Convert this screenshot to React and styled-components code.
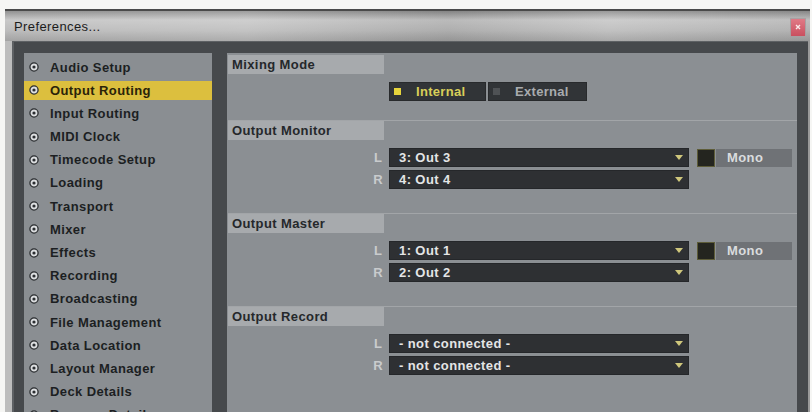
import React from 'react'
import styled, { createGlobalStyle } from 'styled-components'

const GlobalStyle = createGlobalStyle`
  html, body {
    margin: 0;
    padding: 0;
    background: #f6f6f4;
    overflow: hidden;
  }
  body {
    font-family: "Liberation Sans", Arial, sans-serif;
  }
`

const Window = styled.div`
  margin: 9px 0 0 5px;
  width: 805px;
  height: 403px;
  display: flex;
  flex-direction: column;
  overflow: hidden;
`

const TitleBar = styled.div`
  height: 30px;
  border-top: 2px solid #4a4a4a;
  display: flex;
  align-items: center;
  justify-content: space-between;
  padding: 0 4px 0 9px;
  background:
    linear-gradient(90deg, rgba(255,255,255,0.05) 0%, rgba(255,255,255,0.15) 30%, rgba(0,0,0,0.06) 55%, rgba(255,255,255,0.12) 75%, rgba(0,0,0,0.04) 100%),
    linear-gradient(180deg, #8c8c8c 0%, #c6c6c6 30%, #b9b9b9 65%, #9e9e9e 100%);
`

const Title = styled.span`
  font-size: 13px;
  letter-spacing: 0.4px;
  color: #1c1c1c;
`

const CloseButton = styled.div`
  width: 14px;
  height: 17px;
  margin-top: 2px;
  background: linear-gradient(180deg, #e07a86 0%, #c9505f 100%);
  border: 1px solid #a8a0a2;
  display: flex;
  align-items: center;
  justify-content: center;
`

const Body = styled.div`
  flex: 1;
  display: flex;
  gap: 15px;
  padding: 12px 11px 0 12px;
  background: #46494c;
  border-left: 7px solid #bdbdbd;
  border-right: 2px solid #9a9a9a;
  box-shadow: inset 2px 1px 0 #5e6164;
  min-height: 0;
`

const Sidebar = styled.div`
  width: 188px;
  background: #8a8e92;
  padding-top: 4.5px;
  display: flex;
  flex-direction: column;
`

const NavItem = styled.div`
  height: 19px;
  flex: none;
  margin-bottom: 4.2px;
  display: flex;
  align-items: center;
  gap: 11px;
  padding-left: 5px;
  background: ${({ $active }) => ($active ? '#dcbf3e' : 'transparent')};
  color: ${({ $active }) => ($active ? '#2a2309' : '#1c1f22')};
  font-size: 13px;
  font-weight: bold;
  letter-spacing: 0.4px;
  white-space: nowrap;
`

const Content = styled.div`
  flex: 1;
  background: #8b8f93;
  padding-left: 1px;
  display: flex;
  flex-direction: column;
`

const Section = styled.div`
  border-top: ${({ $first }) => ($first ? 'none' : '1px solid #a2a5a8')};
  padding-top: ${({ $first }) => ($first ? '2px' : '0')};
  padding-bottom: ${({ $first }) => ($first ? '19px' : '24px')};
  display: flex;
  flex-direction: column;
  gap: 8px;
`

const SectionHeader = styled.div`
  width: 152px;
  height: 19px;
  padding-left: 4px;
  background: #a7aaad;
  color: #25282b;
  font-size: 13px;
  font-weight: bold;
  letter-spacing: 0.4px;
  display: flex;
  align-items: center;
`

const ModeRow = styled.div`
  margin-left: 161px;
  display: flex;
  gap: 2px;
`

const ModeButton = styled.div`
  width: ${({ $w }) => $w}px;
  height: 19px;
  box-sizing: border-box;
  background: #313437;
  border: 1px solid #282a2c;
  display: flex;
  align-items: center;
  padding-left: 4px;
  gap: 15px;
  color: ${({ $on }) => ($on ? '#d8cf5a' : '#a8abae')};
  font-size: 13px;
  font-weight: bold;
  letter-spacing: 0.3px;
`

const Led = styled.span`
  width: 7px;
  height: 7px;
  background: ${({ $on }) => ($on ? '#e6d43c' : '#4f5255')};
  flex: none;
`

const Channels = styled.div`
  display: flex;
  flex-direction: column;
  gap: 3px;
  margin-left: 139px;
`

const ChannelRow = styled.div`
  display: flex;
  align-items: center;
  height: 19px;
`

const ChannelLabel = styled.span`
  width: 22px;
  text-align: center;
  color: #c9cbcd;
  font-size: 13px;
  font-weight: bold;
`

const Select = styled.div`
  width: 300px;
  height: 19px;
  box-sizing: border-box;
  background: #2e3033;
  border: 1px solid #25272a;
  display: flex;
  align-items: center;
  justify-content: space-between;
  padding: 0 5px 0 9px;
  color: #e4e5e6;
  font-size: 13px;
  font-weight: bold;
  letter-spacing: 0.4px;
`

const MonoBox = styled.span`
  width: 18px;
  height: 18px;
  box-sizing: border-box;
  margin-left: 8px;
  background: #24251f;
  border: 1px solid #5d5c38;
`

const MonoButton = styled.span`
  width: 76px;
  height: 18px;
  margin-left: 1px;
  background: #6f7276;
  color: #dadcde;
  font-size: 13px;
  font-weight: bold;
  letter-spacing: 0.4px;
  display: flex;
  align-items: center;
  padding-left: 11px;
  box-sizing: border-box;
`

const RadioIcon = () => (
  <svg width="10" height="10" viewBox="0 0 10 10">
    <circle cx="5" cy="5" r="4.1" fill="#dcdee0" stroke="#2b2e31" strokeWidth="1.3" />
    <circle cx="5" cy="5" r="1.6" fill="#2b2e31" />
  </svg>
)

const Arrow = () => (
  <svg width="8" height="5" viewBox="0 0 8 5">
    <path d="M0 0 L8 0 L4 5 Z" fill="#cfc77c" />
  </svg>
)

const navItems = [
  'Audio Setup',
  'Output Routing',
  'Input Routing',
  'MIDI Clock',
  'Timecode Setup',
  'Loading',
  'Transport',
  'Mixer',
  'Effects',
  'Recording',
  'Broadcasting',
  'File Management',
  'Data Location',
  'Layout Manager',
  'Deck Details',
  'Browser Details',
]

const outputs = [
  { title: 'Output Monitor', l: '3: Out 3', r: '4: Out 4', mono: true },
  { title: 'Output Master', l: '1: Out 1', r: '2: Out 2', mono: true },
  { title: 'Output Record', l: '- not connected -', r: '- not connected -', mono: false },
]

const App = () => {
  return (
    <>
      <GlobalStyle />
      <Window>
        <TitleBar>
          <Title>Preferences...</Title>
          <CloseButton>
            <svg width="6" height="6" viewBox="0 0 6 6">
              <path d="M1 1 L5 5 M5 1 L1 5" stroke="#fbeaea" strokeWidth="1.4" />
            </svg>
          </CloseButton>
        </TitleBar>
        <Body>
          <Sidebar>
            {navItems.map((item) => (
              <NavItem key={item} $active={item === 'Output Routing'}>
                <RadioIcon />
                {item}
              </NavItem>
            ))}
          </Sidebar>
          <Content>
            <Section $first>
              <SectionHeader>Mixing Mode</SectionHeader>
              <ModeRow>
                <ModeButton $w={97} $on>
                  <Led $on />
                  Internal
                </ModeButton>
                <ModeButton $w={99}>
                  <Led />
                  External
                </ModeButton>
              </ModeRow>
            </Section>
            {outputs.map((out) => (
              <Section key={out.title}>
                <SectionHeader>{out.title}</SectionHeader>
                <Channels>
                  <ChannelRow>
                    <ChannelLabel>L</ChannelLabel>
                    <Select>
                      {out.l}
                      <Arrow />
                    </Select>
                    {out.mono && (
                      <>
                        <MonoBox />
                        <MonoButton>Mono</MonoButton>
                      </>
                    )}
                  </ChannelRow>
                  <ChannelRow>
                    <ChannelLabel>R</ChannelLabel>
                    <Select>
                      {out.r}
                      <Arrow />
                    </Select>
                  </ChannelRow>
                </Channels>
              </Section>
            ))}
          </Content>
        </Body>
      </Window>
    </>
  )
}

export default App
